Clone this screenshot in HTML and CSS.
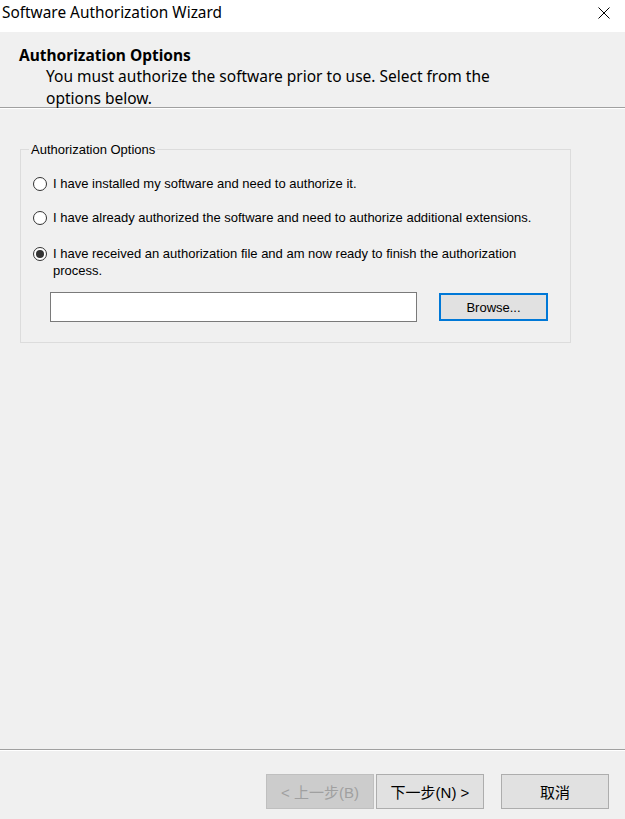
FILE: index.html
```html
<!DOCTYPE html>
<html lang="en-US">
<head>
	<meta charset="utf-8">
	<title>Software Authorization Wizard</title>
	<link rel="stylesheet" href="styles.css">
</head>
<body>
	<div class="window">
		<div class="titlebar">
			<span class="title">Software Authorization Wizard</span>
			<svg class="close" width="12" height="12" viewBox="0 0 12 12">
				<path d="M0.5 0.5L11.5 11.5M11.5 0.5L0.5 11.5" stroke="#000" stroke-width="1" fill="none"/>
			</svg>
		</div>
		<div class="header">
			<h1>Authorization Options</h1>
			<p>You must authorize the software prior to use. Select from the options below.</p>
		</div>
		<main>
			<fieldset class="group">
				<legend>Authorization Options</legend>
				<label class="option first">
					<span class="radio"></span>
					<span>I have installed my software and need to authorize it.</span>
				</label>
				<label class="option second">
					<span class="radio"></span>
					<span>I have already authorized the software and need to authorize additional extensions.</span>
				</label>
				<label class="option third">
					<span class="radio checked"></span>
					<span>I have received an authorization file and am now ready to finish the authorization process.</span>
				</label>
				<div class="file-row">
					<input class="file" type="text">
					<button class="btn browse" type="button">Browse...</button>
				</div>
			</fieldset>
		</main>
		<footer>
			<button class="btn back" type="button" disabled>&lt; 上一步(B)</button>
			<button class="btn next" type="button">下一步(N) &gt;</button>
			<button class="btn cancel" type="button">取消</button>
		</footer>
	</div>
</body>
</html>
```

FILE: styles.css
```css
html,body{
	margin:0;
	height:100%;
}

*{
	box-sizing:border-box;
}

body{
	background:#f0f0f0;
	font-family:"Liberation Sans",Arial,sans-serif;
	color:#000;
}

.window{
	display:flex;
	flex-direction:column;
	height:819px;
}

.titlebar{
	height:32px;
	background:#fff;
	display:flex;
	align-items:flex-start;
	justify-content:space-between;
	padding:1px 15px 0 2px;
}
.title{
	font-family:"Noto Sans",sans-serif;
	font-size:15.4px;
	line-height:24px;
}
.close{
	margin-top:6px;
}

.header{
	height:76px;
	padding:13px 0 0 19px;
	border-bottom:1px solid #a0a0a0;
	box-shadow:0 1px 0 #fff;
	font-family:"Noto Sans",sans-serif;
}
.header h1{
	margin:0;
	font-size:15.5px;
	font-weight:bold;
	line-height:21px;
}
.header p{
	margin:0 0 0 27px;
	width:470px;
	font-size:15.5px;
	line-height:21.5px;
}

main{
	flex:1;
	padding:34px 0 0 20px;
}

.group{
	margin:0;
	width:551px;
	border:1px solid #dcdcdc;
	padding:0 0 20px 12px;
	font-size:13px;
}
.group legend{
	padding:0 2px;
	margin-left:-4px;
	line-height:15px;
}

.option{
	display:flex;
	align-items:flex-start;
	gap:7px;
	line-height:17px;
}
.option.first{
	margin-top:18px;
}
.option.second{
	margin-top:17px;
}
.option.third{
	margin-top:19px;
	width:500px;
}

.radio{
	flex:none;
	width:14px;
	height:14px;
	margin-top:1.5px;
	margin-left:-0.5px;
	margin-right:-0.5px;
	border:1px solid #333;
	border-radius:50%;
	background:#fff;
	display:flex;
	align-items:center;
	justify-content:center;
}
.radio.checked::after{
	content:"";
	width:8px;
	height:8px;
	border-radius:50%;
	background:#333;
}

.file-row{
	display:flex;
	align-items:center;
	margin:13px 0 0 17px;
}
.file{
	width:367px;
	height:30px;
	border:1px solid #7a7a7a;
	background:#fff;
	margin:0;
}
.btn{
	font-family:"Liberation Sans","Noto Sans CJK SC",sans-serif;
	font-size:13px;
	color:#000;
	background:#e1e1e1;
	border:1px solid #adadad;
	padding:0;
	margin:0;
}
.browse{
	width:109px;
	height:28px;
	margin-left:22px;
	border:2px solid #0078d7;
}

footer{
	height:70px;
	border-top:1px solid #a0a0a0;
	box-shadow:inset 0 1px 0 #fff;
	display:flex;
	justify-content:flex-end;
	align-items:flex-start;
	padding:24px 16px 0 0;
	gap:2px;
}
footer .btn{
	width:108px;
	height:35px;
	font-size:15px;
}
.back{
	background:#cccccc;
	border-color:#bfbfbf;
	color:#a0a0a0;
}
.cancel{
	margin-left:15px;
}
```
